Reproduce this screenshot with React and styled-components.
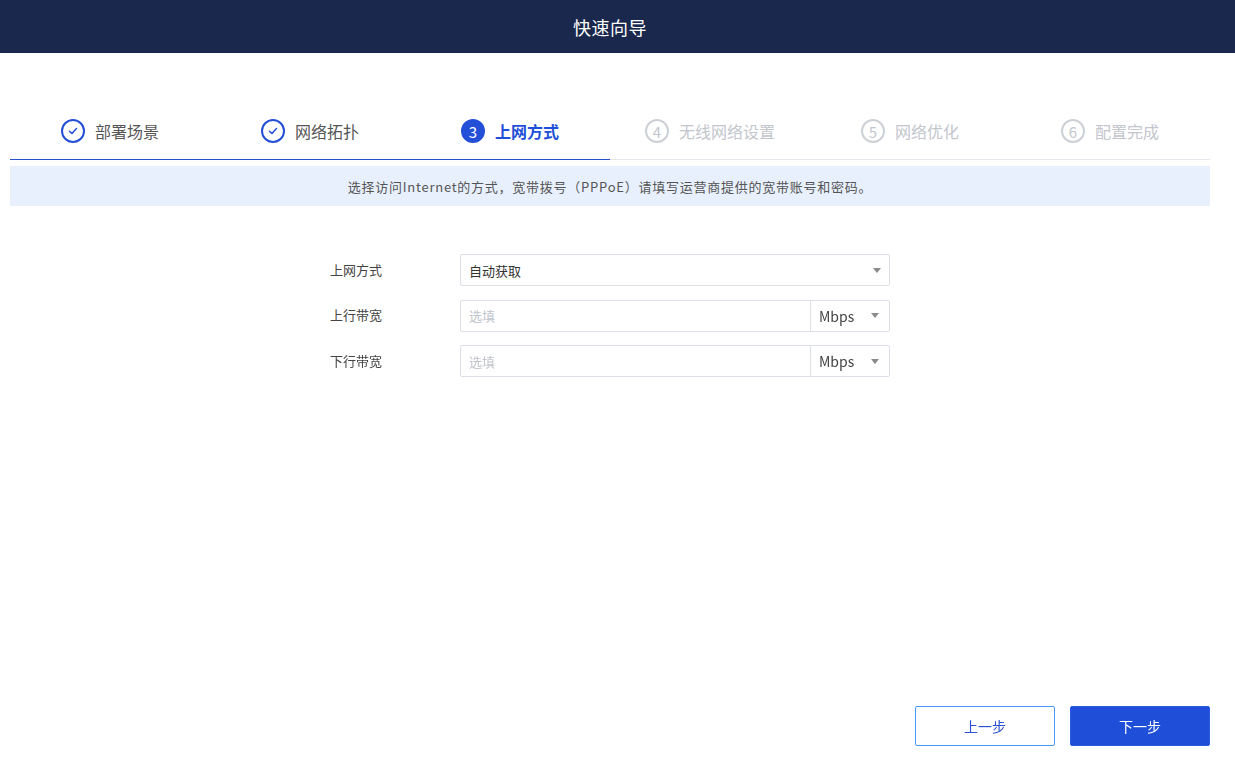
import React from 'react';
import styled, { createGlobalStyle } from 'styled-components';

const GlobalStyle = createGlobalStyle`
  html, body { margin: 0; padding: 0; background: #fff; }
  body {
    font-family: "Noto Sans CJK SC", "Noto Sans", "Liberation Sans", sans-serif;
    color: #333;
  }
  * { box-sizing: border-box; }
`;

const Page = styled.div`
  display: flex;
  flex-direction: column;
  min-height: 777px;
`;

const Header = styled.header`
  height: 53px;
  padding-right: 15px;
  background: #19284c;
  color: #fff;
  font-size: 18px;
  display: flex;
  align-items: center;
  justify-content: center;
  letter-spacing: 0.5px;
`;

const Body = styled.main`
  width: 1200px;
  margin-left: 10px;
  flex: 1;
  display: flex;
  flex-direction: column;
`;

const Steps = styled.ol`
  list-style: none;
  margin: 50px 0 0;
  padding: 0;
  display: flex;
`;

const Step = styled.li`
  width: 200px;
  height: 57px;
  display: flex;
  align-items: center;
  justify-content: center;
  gap: 10px;
  border-bottom: 1px solid ${(p) => (p.$reached ? '#2a4fce' : '#e4e6eb')};
  font-size: 16px;
  font-weight: ${(p) => (p.$state === 'active' ? 700 : 400)};
  color: ${(p) =>
    p.$state === 'active' ? '#1f4fd8' : p.$state === 'done' ? '#555' : '#c3c6cd'};
`;

const Circle = styled.span`
  width: 24px;
  height: 24px;
  border-radius: 50%;
  flex: none;
  display: flex;
  align-items: center;
  justify-content: center;
  font-size: 15px;
  font-weight: 400;
  border: 2px solid
    ${(p) => (p.$state === 'pending' ? '#cdd0d6' : '#2450d8')};
  background: ${(p) => (p.$state === 'active' ? '#2450d8' : '#fff')};
  color: ${(p) =>
    p.$state === 'active' ? '#fff' : p.$state === 'pending' ? '#c3c6cd' : '#2450d8'};
`;

const Notice = styled.div`
  margin-top: 6px;
  height: 40px;
  background: #e8f0fe;
  font-size: 13px;
  letter-spacing: 0.75px;
  color: #555;
  display: flex;
  align-items: center;
  justify-content: center;
`;

const Form = styled.form`
  margin: 48px 0 0 320px;
  display: flex;
  flex-direction: column;
  gap: 13.5px;
`;

const Row = styled.div`
  display: flex;
  align-items: center;
  height: 32px;
`;

const Label = styled.label`
  width: 130px;
  font-size: 13px;
  color: #444;
  margin-top: -2px;
`;

const Field = styled.div`
  width: 430px;
  height: 32px;
  border: 1px solid #dcdfe6;
  border-radius: 2px;
  display: flex;
  align-items: stretch;
  font-size: 13px;
  color: #333;
`;

const Value = styled.div`
  flex: 1;
  display: flex;
  align-items: center;
  padding: 0 8px;
`;

const Input = styled.input`
  flex: 1;
  border: none;
  outline: none;
  padding: 0 8px;
  font: inherit;
  color: #333;
  background: transparent;
  &::placeholder { color: #c0c4cc; }
`;

const Unit = styled.div`
  width: 79px;
  border-left: 1px solid #dcdfe6;
  display: flex;
  align-items: center;
  padding: 0 8px;
  font-size: 14px;
  color: #444;
`;

const Arrow = styled.span`
  margin-left: auto;
  margin-right: ${(p) => (p.$inner ? '0' : '2px')};
  width: 0;
  height: 0;
  border-left: 4px solid transparent;
  border-right: 4px solid transparent;
  border-top: 5px solid #8a8a8a;
`;

const Footer = styled.div`
  margin-top: auto;
  padding-bottom: 31px;
  display: flex;
  justify-content: flex-end;
  gap: 15px;
`;

const Button = styled.button`
  width: 140px;
  height: 40px;
  border-radius: 2px;
  font: inherit;
  font-size: 14px;
  cursor: pointer;
  border: 1px solid ${(p) => (p.$primary ? '#2b5be0' : '#4a98f5')};
  background: ${(p) => (p.$primary ? '#1f4fd8' : '#fff')};
  color: ${(p) => (p.$primary ? '#fff' : '#2a4fd0')};
`;

const Check = () => (
  <svg width="10" height="8" viewBox="0 0 10 8" fill="none">
    <path d="M1.5 4.2 L4 6.5 L8.5 1.5" stroke="#2450d8" strokeWidth="1.5" strokeLinecap="round" strokeLinejoin="round" />
  </svg>
);

const steps = ['部署场景', '网络拓扑', '上网方式', '无线网络设置', '网络优化', '配置完成'];
const current = 2;

export default function App() {
  return (
    <Page>
      <GlobalStyle />
      <Header>快速向导</Header>
      <Body>
        <Steps>
          {steps.map((name, i) => {
            const state = i < current ? 'done' : i === current ? 'active' : 'pending';
            return (
              <Step key={name} $state={state} $reached={i <= current}>
                <Circle $state={state}>{state === 'done' ? <Check /> : i + 1}</Circle>
                {name}
              </Step>
            );
          })}
        </Steps>
        <Notice>选择访问Internet的方式，宽带拨号（PPPoE）请填写运营商提供的宽带账号和密码。</Notice>
        <Form onSubmit={(e) => e.preventDefault()}>
          <Row>
            <Label>上网方式</Label>
            <Field>
              <Value>
                自动获取
                <Arrow $inner />
              </Value>
            </Field>
          </Row>
          <Row>
            <Label>上行带宽</Label>
            <Field>
              <Input placeholder="选填" autoFocus />
              <Unit>
                Mbps
                <Arrow />
              </Unit>
            </Field>
          </Row>
          <Row>
            <Label>下行带宽</Label>
            <Field>
              <Input placeholder="选填" />
              <Unit>
                Mbps
                <Arrow />
              </Unit>
            </Field>
          </Row>
        </Form>
        <Footer>
          <Button type="button">上一步</Button>
          <Button type="button" $primary>下一步</Button>
        </Footer>
      </Body>
    </Page>
  );
}
